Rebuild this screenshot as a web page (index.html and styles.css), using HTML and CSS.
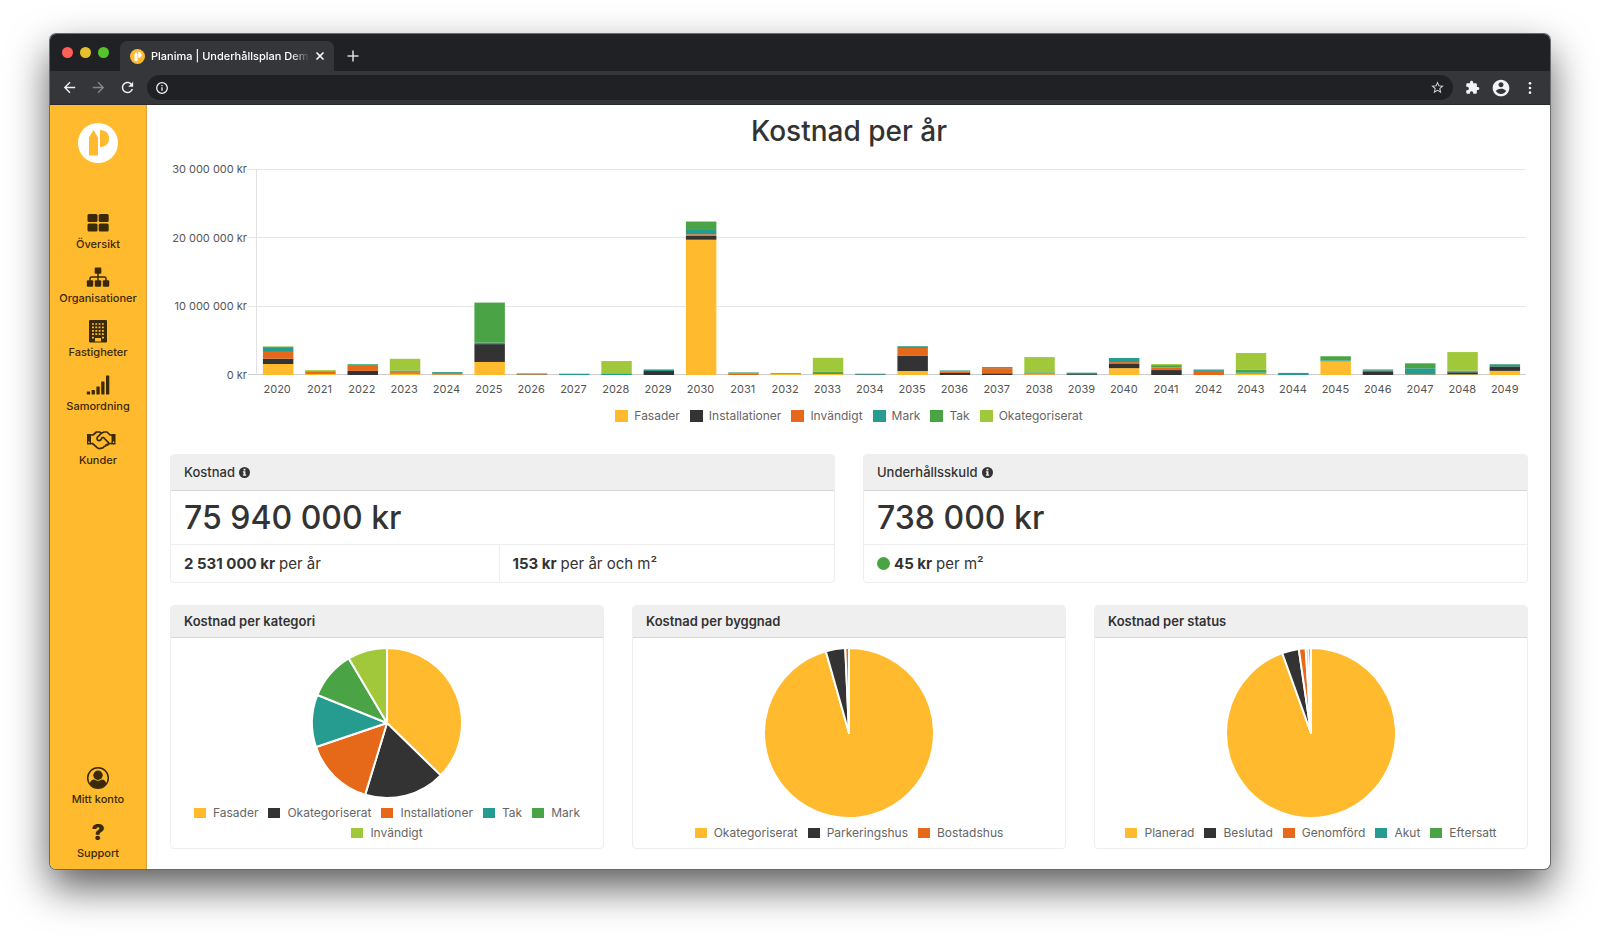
FILE: index.html
```html
<!DOCTYPE html>
<html lang="sv">
<head>
  <meta charset="UTF-8">
  <meta name="viewport" content="width=device-width, initial-scale=1.0">
  <title>Planima | Underhållsplan Demo</title>
  <link rel="stylesheet" href="styles.css">
</head>
<body>
  <div class="window">
    <header class="tabs">
      <div class="lights">
        <span class="light red"></span>
        <span class="light yellow"></span>
        <span class="light green"></span>
      </div>
      <div class="tab">
        <svg class="favicon" viewBox="0 0 40 40">
          <circle cx="20" cy="20" r="20" fill="#ffba2d"/>
          <path fill="#fff" d="M12 32V14l4-7 4 7v18zM22 7c6 0 9 4 9 8.500s-3 8.500-9 8.500z"/>
        </svg>
        <span class="tab-title">Planima | Underhållsplan Demo</span>
        <button type="button" class="icon-button" aria-label="Stäng flik">
          <svg width="10" height="10" viewBox="0 0 10 10"><path d="M1.500 1.500l7 7M8.500 1.500l-7 7" stroke="#fff" stroke-width="1.600"/></svg>
        </button>
      </div>
      <button type="button" class="icon-button new-tab" aria-label="Ny flik">
        <svg width="12" height="12" viewBox="0 0 12 12"><path d="M6 .5v11M.5 6h11" stroke="#d5d6d8" stroke-width="1.600"/></svg>
      </button>
    </header>

    <div class="toolbar">
      <button type="button" class="icon-button" aria-label="Bakåt">
        <svg width="17" height="17" viewBox="0 0 24 24" fill="#f1f1f1"><path d="M20 11H7.830l5.590-5.590L12 4l-8 8 8 8 1.410-1.410L7.830 13H20v-2z"/></svg>
      </button>
      <button type="button" class="icon-button" aria-label="Framåt">
        <svg width="17" height="17" viewBox="0 0 24 24" fill="#85868a"><path d="M12 4l-1.410 1.410L16.170 11H4v2h12.170l-5.580 5.590L12 20l8-8z"/></svg>
      </button>
      <button type="button" class="icon-button" aria-label="Ladda om">
        <svg width="17" height="17" viewBox="0 0 24 24" fill="#f1f1f1"><path d="M17.650 6.350C16.200 4.900 14.210 4 12 4c-4.420 0-7.990 3.580-7.990 8s3.570 8 7.990 8c3.730 0 6.840-2.550 7.730-6h-2.080c-.82 2.330-3.040 4-5.650 4-3.310 0-6-2.690-6-6s2.690-6 6-6c1.660 0 3.140.69 4.220 1.780L13 11h7V4l-2.350 2.350z"/></svg>
      </button>
      <form class="address">
        <svg width="14" height="14" viewBox="0 0 14 14"><circle cx="7" cy="7" r="5.300" fill="none" stroke="#f1f1f1" stroke-width="1.300"/><path d="M7 6.200v3.600M7 4v1.300" stroke="#f1f1f1" stroke-width="1.300"/></svg>
        <input type="text" class="address-input" aria-label="Adress">
        <button type="button" class="icon-button" aria-label="Bokmärk">
          <svg width="15" height="15" viewBox="0 0 24 24" fill="#d5d6d8"><path d="M22 9.240l-7.190-.62L12 2 9.190 8.630 2 9.240l5.460 4.730L5.820 21 12 17.270 18.180 21l-1.630-7.030L22 9.240zM12 15.400l-3.760 2.270 1-4.280-3.320-2.880 4.380-.38L12 6.100l1.710 4.040 4.380.38-3.320 2.880 1 4.280L12 15.400z"/></svg>
        </button>
      </form>
      <div class="tools">
        <button type="button" class="icon-button" aria-label="Tillägg">
          <svg width="15" height="15" viewBox="0 0 24 24" fill="#f1f3f4"><path d="M20.500 11H19V7c0-1.100-.9-2-2-2h-4V3.500C13 2.120 11.880 1 10.500 1S8 2.120 8 3.500V5H4c-1.100 0-1.990.9-1.990 2v3.800H3.500c1.490 0 2.700 1.210 2.700 2.700s-1.210 2.700-2.700 2.700H2V20c0 1.100.9 2 2 2h3.800v-1.500c0-1.490 1.210-2.700 2.700-2.700s2.700 1.210 2.700 2.700V22H17c1.100 0 2-.9 2-2v-4h1.500c1.380 0 2.500-1.120 2.500-2.500S21.880 11 20.500 11z"/></svg>
        </button>
        <button type="button" class="icon-button" aria-label="Profil">
          <svg width="20" height="20" viewBox="0 0 24 24" fill="#f1f3f4"><path d="M12 2C6.480 2 2 6.480 2 12s4.480 10 10 10 10-4.480 10-10S17.520 2 12 2zm0 3c1.660 0 3 1.340 3 3s-1.340 3-3 3-3-1.340-3-3 1.340-3 3-3zm0 14.200c-2.500 0-4.710-1.280-6-3.220.03-1.990 4-3.080 6-3.080s5.970 1.090 6 3.080c-1.290 1.940-3.500 3.220-6 3.220z"/></svg>
        </button>
        <button type="button" class="icon-button" aria-label="Meny">
          <svg width="16" height="16" viewBox="0 0 24 24" fill="#f1f3f4"><circle cx="12" cy="5" r="2"/><circle cx="12" cy="12" r="2"/><circle cx="12" cy="19" r="2"/></svg>
        </button>
      </div>
    </div>

    <div class="app">
      <nav class="sidebar">
        <a href="#" class="logo" aria-label="Planima">
          <svg width="40" height="40" viewBox="0 0 40 40">
            <circle cx="20" cy="20" r="20" fill="#fff"/>
            <path fill="#ffba2d" d="M11 32.500V14.500l4.500-7.500 4.500 7.500v18zM22 7c6 0 9 4 9 8.500S28 24 22 24z"/>
          </svg>
        </a>
        <a href="#" class="nav-item">
          <svg width="22" height="28" viewBox="0 0 22 28">
            <rect x="0.500" y="5" width="10" height="8" rx="1.500"/><rect x="11.700" y="5" width="10" height="8" rx="1.500"/>
            <rect x="0.500" y="14.500" width="10" height="8" rx="1.500"/><rect x="11.700" y="14.500" width="10" height="8" rx="1.500"/>
          </svg>
          <span>Översikt</span>
        </a>
        <a href="#" class="nav-item">
          <svg width="24" height="28" viewBox="0 0 24 28">
            <rect x="8.700" y="4.500" width="6.600" height="6.200" rx="1"/>
            <rect x="0.800" y="17.300" width="6.400" height="6.400" rx="1"/><rect x="8.800" y="17.300" width="6.400" height="6.400" rx="1"/><rect x="16.800" y="17.300" width="6.400" height="6.400" rx="1"/>
            <path d="M12 10v8M4 18v-2.500q0-1.500 1.500-1.500h13q1.500 0 1.500 1.500V18" fill="none" stroke="#3a2a08" stroke-width="1.500"/>
          </svg>
          <span>Organisationer</span>
        </a>
        <a href="#" class="nav-item">
          <svg width="18" height="28" viewBox="0 0 18 28">
            <path fill-rule="evenodd" d="M1 3h16q1 0 1 1v20.500q0 1-1 1H1q-1 0-1-1V4q0-1 1-1zM6 21v3.500h6V21z"/>
            <path d="M3 7h12M3 10.400h12M3 13.800h12M3 17.200h12" stroke="#ffba2d" stroke-width="1.700" stroke-dasharray="1.900 1.400"/>
            <path d="M3 20.600h1.900M13 20.600h1.900" stroke="#ffba2d" stroke-width="1.700"/>
          </svg>
          <span>Fastigheter</span>
        </a>
        <a href="#" class="nav-item">
          <svg width="24" height="28" viewBox="0 0 24 28">
            <rect x="0.800" y="20.500" width="3.300" height="3" rx=".4"/><rect x="5.600" y="19" width="3.300" height="4.500" rx=".4"/><rect x="10.400" y="15.500" width="3.300" height="8" rx=".4"/><rect x="15.200" y="10.500" width="3.300" height="13" rx=".4"/><rect x="20" y="4.500" width="3.300" height="19" rx=".4"/>
          </svg>
          <span>Samordning</span>
        </a>
        <a href="#" class="nav-item">
          <svg width="36" height="28" viewBox="0 0 36 28">
            <path fill-rule="evenodd" d="M7 9h4v10.500H7zM8.300 16.500v1.600h1.300v-1.600zM31.500 9h4v10.500h-4zM32.900 16.500v1.600h1.300v-1.600z"/>
            <path fill="none" stroke="#3a2a08" stroke-width="1.700" stroke-linejoin="round" stroke-linecap="round" d="M11 10h2l3.500-3h3l2 1.200L24 7h3l3 3h1.500M11 18.500h1.500l5 4.300q2 1.700 3.500.2q2 .5 3-1.300q2-.2 2.200-2L30 18.500h1.500M21.500 8.200l-4.300 4.200q-.7 3 1.600 3.300 2 .2 3.200-3l1.500-.2 5 5.200q.6 1.400-.8 2.300"/>
          </svg>
          <span>Kunder</span>
        </a>
        <a href="#" class="nav-item nav-bottom">
          <svg width="24" height="28" viewBox="0 0 24 28">
            <circle cx="12" cy="14" r="10.300" fill="none" stroke="#3a2a08" stroke-width="1.500"/>
            <circle cx="12" cy="11.200" r="4.700"/>
            <path d="M8.300 15.500q3.700 2.600 7.400 0 4 .2 4.600 4.200Q17 24 12 24t-8.300-4.300q.6-4 4.600-4.200z"/>
          </svg>
          <span>Mitt konto</span>
        </a>
        <a href="#" class="nav-item">
          <b class="question">?</b>
          <span>Support</span>
        </a>
      </nav>

      <main class="content">
        <h1>Kostnad per år</h1>
        <section class="year-chart">
          <div class="y-axis">
            <span>30 000 000 kr</span>
            <span>20 000 000 kr</span>
            <span>10 000 000 kr</span>
            <span>0 kr</span>
          </div>
          <div class="plot">
            <div class="grid-lines"><i></i><i></i><i></i><i></i></div>
            <svg id="bars" class="bars" viewBox="0 0 3000 30000" preserveAspectRatio="none"></svg>
          </div>
          <div id="years" class="years"></div>
        </section>
        <ul class="legend legend-large">
          <li><i class="swatch c0"></i>Fasader</li>
          <li><i class="swatch c1"></i>Installationer</li>
          <li><i class="swatch c2"></i>Invändigt</li>
          <li><i class="swatch c3"></i>Mark</li>
          <li><i class="swatch c4"></i>Tak</li>
          <li><i class="swatch c5"></i>Okategoriserat</li>
        </ul>

        <div class="row two">
          <section class="card">
            <h2 class="tall">Kostnad
              <svg class="info" viewBox="0 0 12 12"><circle cx="6" cy="6" r="6"/><path fill="#efefef" d="M5 2h2v1.700H5zM4.200 4.700H7v3.600h.8v1.300H4.200V8.300H5V6h-.8z"/></svg>
            </h2>
            <p class="amount">75 940 000 kr</p>
            <div class="details">
              <p><b>2 531 000 kr</b> per år</p>
              <p><b>153 kr</b> per år och m²</p>
            </div>
          </section>
          <section class="card">
            <h2 class="tall">Underhållsskuld
              <svg class="info" viewBox="0 0 12 12"><circle cx="6" cy="6" r="6"/><path fill="#efefef" d="M5 2h2v1.700H5zM4.200 4.700H7v3.600h.8v1.300H4.200V8.300H5V6h-.8z"/></svg>
            </h2>
            <p class="amount">738 000 kr</p>
            <div class="details">
              <p><span class="dot"></span><b>45 kr</b> per m²</p>
            </div>
          </section>
        </div>

        <div class="row three">
          <section class="card">
            <h2>Kostnad per kategori</h2>
            <div class="pie-body">
              <svg class="pie" data-values="37.3,17.4,15.1,11.3,10.4,8.5" viewBox="-100 -100 200 200"></svg>
              <ul class="legend">
                <li><i class="swatch c0"></i>Fasader</li>
                <li><i class="swatch c1"></i>Okategoriserat</li>
                <li><i class="swatch c2"></i>Installationer</li>
                <li><i class="swatch c3"></i>Tak</li>
                <li><i class="swatch c4"></i>Mark</li>
                <li><i class="swatch c5"></i>Invändigt</li>
              </ul>
            </div>
          </section>
          <section class="card">
            <h2>Kostnad per byggnad</h2>
            <div class="pie-body">
              <svg class="pie" data-values="95.6,3.7,0.7" viewBox="-100 -100 200 200"></svg>
              <ul class="legend">
                <li><i class="swatch c0"></i>Okategoriserat</li>
                <li><i class="swatch c1"></i>Parkeringshus</li>
                <li><i class="swatch c2"></i>Bostadshus</li>
              </ul>
            </div>
          </section>
          <section class="card">
            <h2>Kostnad per status</h2>
            <div class="pie-body">
              <svg class="pie" data-values="94.5,3.2,1.3,0.5,0.5" viewBox="-100 -100 200 200"></svg>
              <ul class="legend">
                <li><i class="swatch c0"></i>Planerad</li>
                <li><i class="swatch c1"></i>Beslutad</li>
                <li><i class="swatch c2"></i>Genomförd</li>
                <li><i class="swatch c3"></i>Akut</li>
                <li><i class="swatch c4"></i>Eftersatt</li>
              </ul>
            </div>
          </section>
        </div>
      </main>
    </div>
  </div>

  <script src="charts.js"></script>
</body>
</html>
```

FILE: styles.css
```css
* {
  box-sizing: border-box;
}

body {
  font-family: Inter, 'Liberation Sans', sans-serif;
  background-color: #fff;
  color: #333;
  margin: 0;
  padding: 34px 50px 66px;
  min-height: 100vh;
  display: flex;
}

h1, h2, p, ul {
  margin: 0;
  padding: 0;
  font-weight: 500;
}

.window {
  flex: 1;
  min-width: 0;
  display: flex;
  flex-direction: column;
  background-color: #fff;
  border-radius: 6px;
  overflow: hidden;
  box-shadow: 0 0 0 1px #6b6b6b, 0 18px 40px rgba(0, 0, 0, 0.65);
}

/* browser chrome */
.tabs {
  display: flex;
  align-items: flex-end;
  height: 37px;
  padding-left: 12px;
  background-color: #202124;
}

.lights {
  display: flex;
  align-items: center;
  align-self: center;
  gap: 7px;
  margin-right: 11px;
}

.light {
  width: 11px;
  height: 11px;
  border-radius: 50%;
}

.red { background-color: #fe5f57; }
.yellow { background-color: #e5bf2c; }
.green { background-color: #57c22d; }

.tab {
  display: flex;
  align-items: center;
  width: 214px;
  height: 30px;
  padding: 0 9px 0 10px;
  border-radius: 7px 7px 0 0;
  background-color: #35363a;
  color: #fff;
}

.favicon {
  flex: none;
  width: 15px;
  height: 15px;
  margin-right: 6px;
}

.tab-title {
  flex: 1;
  overflow: hidden;
  white-space: nowrap;
  font-size: 11px;
  font-weight: 500;
  -webkit-mask-image: linear-gradient(to right, #000 88%, transparent);
  mask-image: linear-gradient(to right, #000 88%, transparent);
}

.icon-button {
  display: flex;
  padding: 0;
  border: none;
  background: none;
  cursor: pointer;
}

.tab .icon-button {
  margin-left: 5px;
}

.new-tab {
  height: 30px;
  align-items: center;
  margin-left: 13px;
}

.toolbar {
  display: flex;
  align-items: center;
  gap: 12px;
  height: 34px;
  padding: 0 12px 0 11px;
  background-color: #35363a;
  border-bottom: 1px solid #2a2b2e;
}

.address {
  flex: 1;
  display: flex;
  align-items: center;
  height: 25px;
  margin-left: -1px;
  padding: 0 8px;
  border-radius: 13px;
  background-color: #202124;
}

.address-input {
  flex: 1;
  border: none;
  outline: none;
  background: none;
  color: #fff;
}

.tools {
  display: flex;
  align-items: center;
  gap: 11px;
}

/* app */
.app {
  flex: 1;
  display: flex;
}

.sidebar {
  flex: none;
  width: 97px;
  display: flex;
  flex-direction: column;
  align-items: center;
  gap: 12px;
  padding: 18px 0 9px;
  background-color: #ffba2d;
  border-right: 1px solid #d9a23a;
}

.logo {
  display: flex;
  margin-bottom: 34px;
}

.nav-item {
  display: flex;
  flex-direction: column;
  align-items: center;
  color: #3a2a08;
  fill: #3a2a08;
  font-size: 11px;
  font-weight: 500;
  line-height: 14px;
  text-decoration: none;
}

.nav-bottom {
  margin-top: auto;
}

.question {
  font-size: 22px;
  font-weight: 900;
  line-height: 28px;
}

.content {
  flex: 1;
  min-width: 0;
  padding: 8px 22px 20px 23px;
}

h1 {
  font-size: 28px;
  line-height: 36px;
  text-align: center;
}

.year-chart {
  display: grid;
  grid-template-columns: 86px 1fr;
  grid-template-rows: 206px auto;
  padding-right: 2px;
  margin-top: 20px;
  color: #555;
  font-size: 11px;
  line-height: 16px;
}

.y-axis {
  display: flex;
  flex-direction: column;
  justify-content: space-between;
  margin: -8px 0;
  padding-right: 9px;
  text-align: right;
  white-space: nowrap;
}

.plot {
  display: grid;
}

.grid-lines {
  grid-area: 1 / 1;
  display: flex;
  flex-direction: column;
  justify-content: space-between;
  margin-left: -8px;
}

.grid-lines i {
  height: 1px;
  background-color: #e6e6e6;
}

.grid-lines i:last-child {
  background-color: #ccc;
}

.bars {
  grid-area: 1 / 1;
  width: 100%;
  height: 206px;
  border-left: 1px solid #e2e2e2;
}

.years {
  grid-column: 2;
  display: flex;
  padding-top: 6px;
}

.years span {
  flex: 1;
  text-align: center;
}

.legend {
  display: flex;
  flex-wrap: wrap;
  justify-content: center;
  column-gap: 10px;
  list-style: none;
  color: #666;
  font-size: 12px;
  font-weight: 400;
  line-height: 20px;
}

.legend li {
  display: flex;
  align-items: center;
}

.legend-large {
  margin: 9px 0 28px;
}

.swatch {
  width: 12px;
  height: 10px;
  margin-right: 7px;
}

.legend-large .swatch {
  width: 13px;
  height: 12px;
  margin-right: 6px;
}

.c0 { background-color: #ffba2d; fill: #ffba2d; }
.c1 { background-color: #333; fill: #333; }
.c2 { background-color: #e56919; fill: #e56919; }
.c3 { background-color: #269c90; fill: #269c90; }
.c4 { background-color: #4aa446; fill: #4aa446; }
.c5 { background-color: #a0c83a; fill: #a0c83a; }

.row {
  display: grid;
  gap: 28px;
}

.two {
  grid-template-columns: 1fr 1fr;
  margin-bottom: 22px;
}

.three {
  grid-template-columns: 1fr 1fr 1fr;
}

.card {
  border: 1px solid #eee;
  border-radius: 4px;
  overflow: hidden;
}

h2 {
  display: flex;
  align-items: center;
  gap: 4px;
  height: 32px;
  padding: 0 13px 1px;
  background-color: #efefef;
  border-bottom: 1px solid #d6d6d6;
  font-size: 13px;
  font-weight: 600;
}

h2.tall {
  height: 36px;
  font-weight: 500;
}

.info {
  width: 11px;
  height: 11px;
  fill: #333;
}

.amount {
  padding: 0 13px;
  font-size: 32px;
  line-height: 53px;
}

.details {
  display: flex;
  border-top: 1px solid #eee;
}

.details p {
  flex: 1;
  display: flex;
  align-items: center;
  gap: 4px;
  padding: 0 13px;
  font-size: 15px;
  font-weight: 400;
  line-height: 37px;
}

.details p + p {
  flex: 0 0 calc(50% + 4px);
  border-left: 1px solid #eee;
}

.dot {
  width: 13px;
  height: 13px;
  border-radius: 50%;
  background-color: #4aa446;
}

.pie-body {
  display: flex;
  flex-direction: column;
  height: 210px;
  padding: 10px 10px 5px;
}

.pie {
  flex: 1;
  min-height: 0;
  margin-bottom: 5px;
}

.pie path {
  stroke: #fff;
  stroke-width: 2px;
  stroke-linejoin: round;
  vector-effect: non-scaling-stroke;
}
```

FILE: charts.js
```js
// cost per year in tkr: Fasader, Installationer, Invändigt, Mark, Tak, Okategoriserat
const costs = {
  2020: [1600, 780, 980, 700, 60, 60],
  2021: [150, 0, 360, 0, 80, 120],
  2022: [0, 600, 850, 100, 50, 0],
  2023: [150, 50, 220, 120, 120, 1700],
  2024: [70, 0, 100, 250, 0, 0],
  2025: [1900, 2600, 0, 200, 5850, 0],
  2026: [0, 0, 110, 120, 0, 0],
  2027: [0, 0, 0, 190, 0, 0],
  2028: [0, 0, 0, 150, 100, 1780],
  2029: [0, 580, 0, 200, 60, 0],
  2030: [19700, 600, 200, 750, 1100, 0],
  2031: [0, 0, 230, 120, 50, 0],
  2032: [140, 0, 0, 80, 80, 0],
  2033: [150, 0, 0, 150, 150, 2050],
  2034: [0, 70, 0, 120, 0, 0],
  2035: [580, 2200, 1150, 260, 0, 0],
  2036: [0, 300, 230, 130, 0, 0],
  2037: [0, 250, 750, 150, 0, 0],
  2038: [100, 0, 110, 150, 50, 2200],
  2039: [0, 120, 0, 220, 0, 0],
  2040: [1000, 600, 280, 600, 0, 0],
  2041: [0, 720, 340, 80, 300, 150],
  2042: [0, 0, 600, 200, 0, 0],
  2043: [150, 0, 80, 150, 370, 2450],
  2044: [0, 0, 0, 300, 0, 0],
  2045: [1980, 0, 0, 150, 600, 0],
  2046: [0, 550, 80, 180, 0, 0],
  2047: [0, 0, 80, 900, 720, 0],
  2048: [100, 300, 0, 150, 90, 2700],
  2049: [600, 650, 0, 300, 50, 0]
};

const ns = 'http://www.w3.org/2000/svg';
const bars = document.getElementById('bars');
const years = document.getElementById('years');

Object.keys(costs).forEach((year, i) => {
  let top = 30000;
  costs[year].forEach((value, c) => {
    if (!value) return;
    top -= value;
    const rect = document.createElementNS(ns, 'rect');
    rect.setAttribute('x', i * 100 + 14);
    rect.setAttribute('y', top);
    rect.setAttribute('width', 72);
    rect.setAttribute('height', value);
    rect.setAttribute('class', 'c' + c);
    bars.appendChild(rect);
  });

  const label = document.createElement('span');
  label.textContent = year;
  years.appendChild(label);
});

document.querySelectorAll('.pie').forEach((pie) => {
  const values = pie.dataset.values.split(',').map(Number);
  const total = values.reduce((a, b) => a + b, 0);
  let angle = -Math.PI / 2;
  values.forEach((value, c) => {
    const end = angle + value / total * Math.PI * 2;
    const large = end - angle > Math.PI ? 1 : 0;
    const path = document.createElementNS(ns, 'path');
    path.setAttribute('d', `M0 0L${100 * Math.cos(angle)} ${100 * Math.sin(angle)}A100 100 0 ${large} 1 ${100 * Math.cos(end)} ${100 * Math.sin(end)}Z`);
    path.setAttribute('class', 'c' + c);
    pie.appendChild(path);
    angle = end;
  });
});
```
